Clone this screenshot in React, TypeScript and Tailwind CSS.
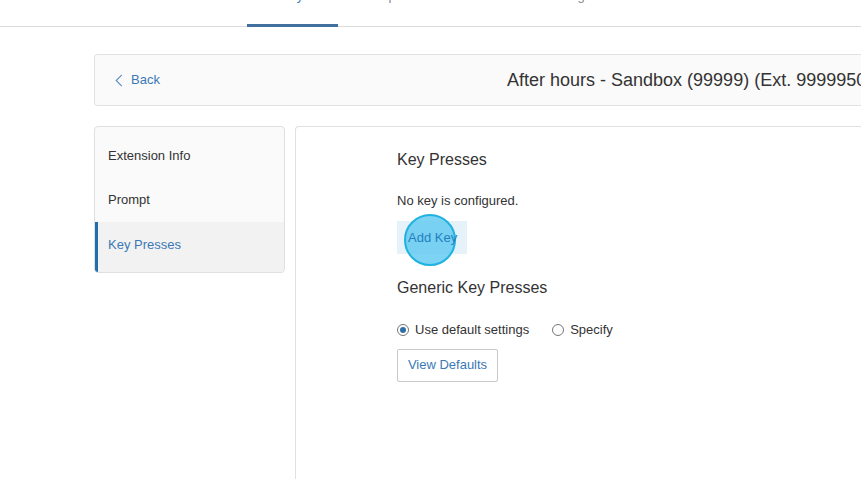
const tabs = [
  { label: "Home", w: "w-[35px]" },
  { label: "Routes", w: "w-[47px]" },
  { label: "Phone System", w: "w-[91px]", active: true },
  { label: "Reports", w: "w-[55px]" },
  { label: "Devices", w: "w-[55px]" },
  { label: "Billing", w: "w-[60px]" },
];

export default function App() {
  return (
    <div
      className="relative h-[479px] w-[861px] overflow-hidden bg-white text-[#333]"
      style={{ fontFamily: '"Liberation Sans", Arial, Helvetica, sans-serif' }}
    >
      {/* ── Top nav (scrolled up) ─────────────────────── */}
      <div className="flex h-[27px] items-end border-b border-[#dcdcdc] pl-[97px]">
        <div className="flex gap-[34px]">
          {tabs.map((t) => (
            <div
              key={t.label}
              className={`${t.w} relative flex h-[27px] flex-col items-start`}
            >
              <span
                className={`-mt-[10px] whitespace-nowrap text-[13px] leading-[13px] ${
                  t.active ? "text-[#3a79b5]" : "text-[#888]"
                }`}
              >
                {t.label}
              </span>
              {t.active && (
                <div className="absolute bottom-[-1px] left-0 h-[3px] w-full bg-[#41709f]" />
              )}
            </div>
          ))}
        </div>
      </div>

      <div className="pl-[94px] pt-[27px]">
        {/* ── Header card ─────────────────────────────── */}
        <div className="flex h-[52px] w-[850px] items-center rounded-[3px] border border-[#e2e2e2] bg-[#fafafa] pl-[20px]">
          <div className="w-[392px] shrink-0">
            <a className="flex items-center text-[13px] text-[#3a79b5]">
              <svg width="8" height="13" viewBox="0 0 8 13" fill="none" className="mr-[8px]">
                <polyline points="6.8,0.8 1.2,6.5 6.8,12.2" stroke="#5a8cc0" strokeWidth="1.1" />
              </svg>
              Back
            </a>
          </div>
          <h1 className="whitespace-nowrap text-[18px] text-[#333]">
            After hours - Sandbox (99999) (Ext. 99999500)
          </h1>
        </div>

        <div className="mt-[20px] flex gap-[10px]">
          {/* ── Sidebar ───────────────────────────────── */}
          <div className="flex h-[147px] w-[191px] flex-col overflow-hidden rounded-[4px] border border-[#e0e0e0] bg-[#fafafa] pt-[6px]">
            <div className="flex h-[45px] items-center pl-[13px] text-[13px] text-[#333]">
              Extension Info
            </div>
            <div className="flex h-[45px] items-center pl-[13px] text-[13px] text-[#333]">
              Prompt
            </div>
            <div className="flex h-[50px] items-center border-l-[3px] border-[#1f6fae] bg-[#f2f2f2] pb-[4px] pl-[10px] text-[13px] text-[#3a79b5]">
              Key Presses
            </div>
          </div>

          {/* ── Main panel ────────────────────────────── */}
          <div className="h-[400px] flex-1 rounded-tl-[4px] border-l border-t border-[#e0e0e0] pl-[101px] pt-[23px]">
            <h2 className="text-[16px] leading-[20px] text-[#333]">Key Presses</h2>
            <p className="mt-[23px] text-[13px] leading-[16px] text-[#333]">
              No key is configured.
            </p>
            <div className="relative mt-[12px] w-fit bg-[#e6f2fa]">
              <div className="absolute left-[7px] top-[-7px] h-[52px] w-[52px] rounded-full border-2 border-[#1fb2e0] bg-[#5cc8f0]/80" />
              <button className="relative flex h-[33px] w-[70px] items-center pl-[11px] text-[13px] text-[#1f7fc0]">
                Add Key
              </button>
            </div>

            <h2 className="mt-[24px] text-[16px] leading-[20px] text-[#333]">
              Generic Key Presses
            </h2>
            <div className="mt-[22px] flex items-center text-[13px] text-[#333]">
              <span className="flex h-[12px] w-[12px] items-center justify-center rounded-full border border-[#777]">
                <span className="h-[6px] w-[6px] rounded-full bg-[#2f6ea8]" />
              </span>
              <span className="ml-[6px]">Use default settings</span>
              <span className="ml-[23px] h-[12px] w-[12px] rounded-full border border-[#777]" />
              <span className="ml-[6px]">Specify</span>
            </div>
            <button className="mt-[9px] flex h-[33px] w-[101px] items-center justify-center rounded-[2px] border border-[#c8c8c8] bg-white text-[13px] text-[#3a79b5]">
              View Defaults
            </button>
          </div>
        </div>
      </div>
    </div>
  );
}
